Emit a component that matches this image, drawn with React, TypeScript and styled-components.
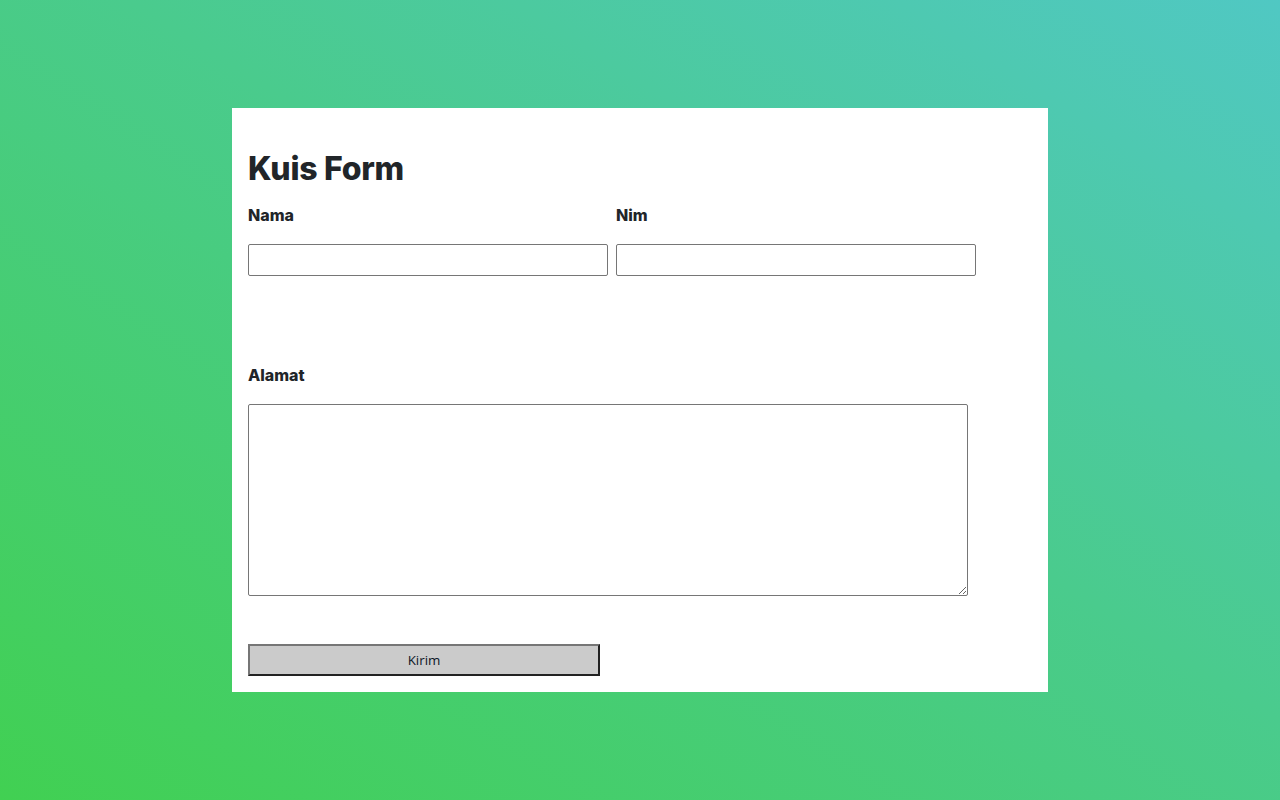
import React from "react";
import styled, { createGlobalStyle } from "styled-components";

const GlobalStyle = createGlobalStyle`
  html, body { margin: 0; padding: 0; height: 100%; }
  body {
    font-family: Inter, "Liberation Sans", sans-serif;
    color: #212529;
  }
  #root { height: 100%; }
`;

const Page = styled.div`
  width: 1280px;
  height: 800px;
  display: flex;
  align-items: center;
  justify-content: center;
  background: linear-gradient(to top right, #41d052 0%, #4acb8d 55%, #50c8c3 100%);
`;

const Card = styled.form`
  width: 816px;
  height: 584px;
  box-sizing: border-box;
  background: #fff;
  padding: 16px;
  display: flex;
  flex-direction: column;
`;

const Title = styled.h1`
  margin: 25px 0 0;
  font-size: 32px;
  font-weight: 800;
  line-height: 39px;
  letter-spacing: -0.25px;
`;

const Row = styled.div`
  display: flex;
  gap: 8px;
  margin-top: 17px;
`;

const Field = styled.div<{ $mt?: number }>`
  display: flex;
  flex-direction: column;
  margin-top: ${(p) => p.$mt ?? 0}px;
`;

const Label = styled.label`
  font-size: 16px;
  font-weight: 800;
  line-height: 20px;
  margin-bottom: 19px;
`;

const Input = styled.input`
  width: 360px;
  height: 32px;
  box-sizing: border-box;
  border: 1px solid #767676;
  border-radius: 2px;
  padding: 4px;
  font-size: 14px;
  margin: 0;
`;

const TextArea = styled.textarea`
  width: 720px;
  height: 192px;
  box-sizing: border-box;
  border: 1px solid #767676;
  border-radius: 2px;
  padding: 4px;
  margin: 0;
  font-family: inherit;
`;

const Button = styled.button`
  margin-top: 48px;
  width: 352px;
  height: 32px;
  box-sizing: border-box;
  background: #cbcbcb;
  border: 2px solid;
  border-color: #767676 #222 #222 #767676;
  font-family: "Open Sans", "Noto Sans", sans-serif;
  font-size: 13.33px;
  color: #0d1526;
  padding: 0;
  cursor: pointer;
`;

export default function App() {
  return (
    <>
      <GlobalStyle />
      <Page>
        <Card onSubmit={(e) => e.preventDefault()}>
          <Title>Kuis Form</Title>
          <Row>
            <Field>
              <Label htmlFor="nama">Nama</Label>
              <Input id="nama" type="text" />
            </Field>
            <Field>
              <Label htmlFor="nim">Nim</Label>
              <Input id="nim" type="text" />
            </Field>
          </Row>
          <Field $mt={89}>
            <Label htmlFor="alamat">Alamat</Label>
            <TextArea id="alamat" />
          </Field>
          <Button type="submit">Kirim</Button>
        </Card>
      </Page>
    </>
  );
}
